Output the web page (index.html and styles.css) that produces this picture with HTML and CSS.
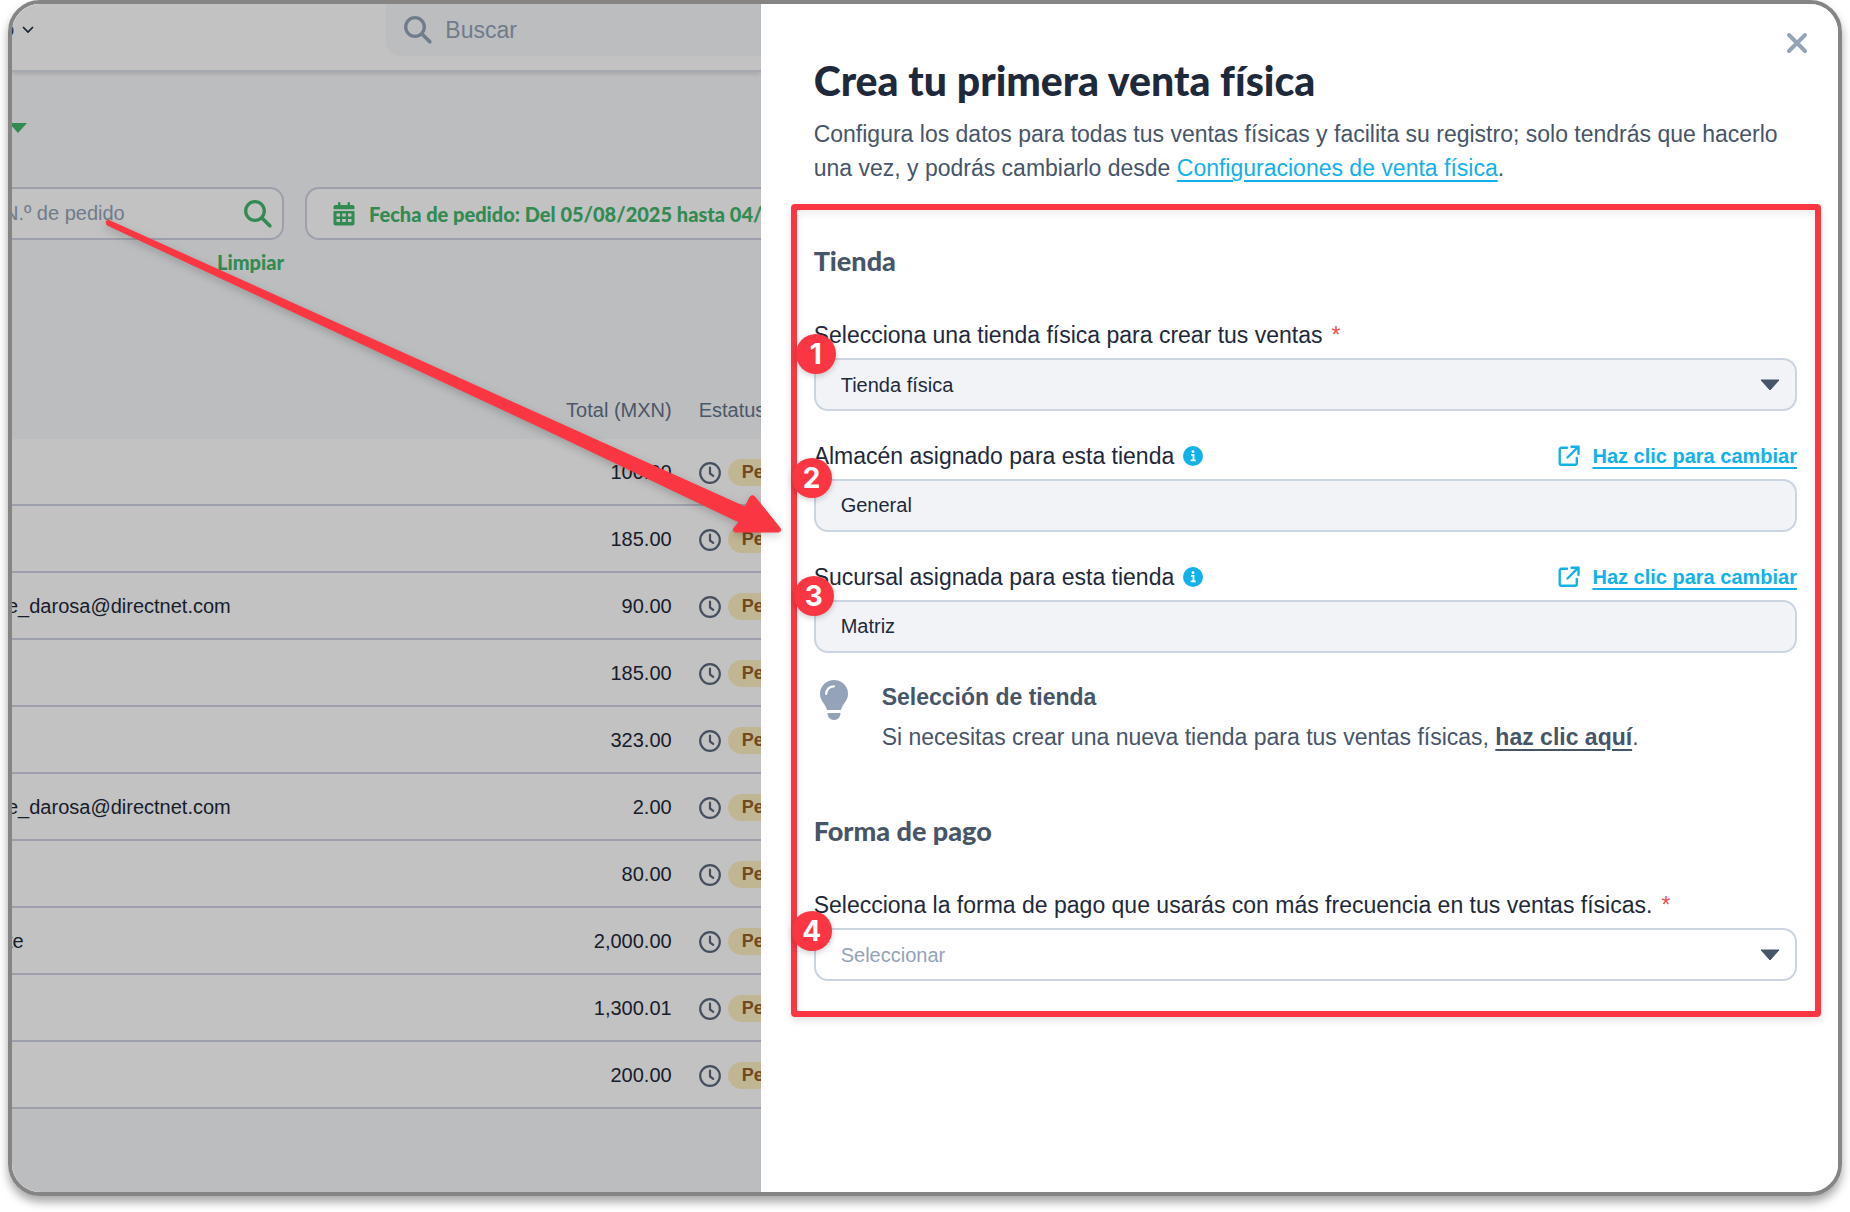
FILE: index.html
```
<!DOCTYPE html>
<html lang="es">
<head>
    <meta charset="UTF-8">
    <meta name="viewport" content="width=device-width, initial-scale=1">
    <title>Crea tu primera venta física</title>
    <link rel="stylesheet" href="styles.css">
</head>
<body>

<svg class="sprite" aria-hidden="true">
    <symbol id="i-search" viewBox="0 0 28 28">
        <circle cx="11" cy="11" r="9.300" fill="none" stroke="currentColor" stroke-width="3.300"/>
        <path d="M18 18l7.800 7.800" fill="none" stroke="currentColor" stroke-width="3.600" stroke-linecap="round"/>
    </symbol>
    <symbol id="i-calendar" viewBox="0 0 22 24">
        <path fill="currentColor" d="M5 1.200a1.200 1.200 0 0 1 2.500 0V3h7V1.200a1.200 1.200 0 0 1 2.500 0V3h2.500A2 2 0 0 1 21.500 5v2.200H.5V5A2 2 0 0 1 2.500 3H5z"/>
        <path fill="currentColor" fill-rule="evenodd" d="M.5 9h21v12.500a2 2 0 0 1-2 2h-17a2 2 0 0 1-2-2zM3.500 11.500v3h3.500v-3zM9.200 11.500v3h3.600v-3zM15 11.500v3h3.500v-3zM3.500 17v3h3.500v-3zM9.200 17v3h3.600v-3zM15 17v3h3.500v-3z"/>
    </symbol>
    <symbol id="i-clock" viewBox="0 0 22 22">
        <g fill="none" stroke="currentColor" stroke-width="2.200" stroke-linecap="round" stroke-linejoin="round">
            <circle cx="11" cy="11" r="9.800"/>
            <path d="M11 5.500V11.500l3.200 2.300"/>
        </g>
    </symbol>
    <symbol id="i-info" viewBox="0 0 20 20">
        <circle cx="10" cy="10" r="10" fill="currentColor"/>
        <circle cx="10" cy="5.700" r="1.400" fill="#fff"/>
        <path d="M8 8.900h2.500v5M7.600 14.400h5" fill="none" stroke="#fff" stroke-width="1.800"/>
    </symbol>
    <symbol id="i-external" viewBox="0 0 22 22">
        <path d="M9 2.700H3.500A1.800 1.800 0 0 0 1.700 4.500V18a1.800 1.800 0 0 0 1.800 1.800H17a1.800 1.800 0 0 0 1.800-1.800V13M9.500 12.500L19.800 2.200M13.500 1.700h7v7" fill="none" stroke="currentColor" stroke-width="2.400" stroke-linecap="round"/>
    </symbol>
</svg>

<div class="frame">
    <main class="orders">
        <header class="topbar">
            <button class="account" type="button" aria-label="Cuenta">
                <span>o</span>
                <svg width="12" height="8" viewBox="0 0 12 8"><path d="M1.500 1.500L6 6l4.500-4.500" fill="none" stroke="currentColor" stroke-width="1.700" stroke-linecap="round"/></svg>
            </button>
            <label class="search">
                <svg width="28" height="28"><use href="#i-search"/></svg>
                <input type="search" placeholder="Buscar" aria-label="Buscar">
            </label>
        </header>

        <div class="toolbar">
            <button class="menu" type="button" aria-label="Acciones">
                <svg width="20" height="10" viewBox="0 0 20 10"><path d="M1 0h18l-9 10z" fill="currentColor"/></svg>
            </button>
        </div>

        <div class="filters">
            <div class="filter">
                <label class="filter-box">
                    <input type="text" placeholder="N.º de pedido" aria-label="N.º de pedido">
                    <svg width="28" height="28"><use href="#i-search"/></svg>
                </label>
                <button class="clear" type="button">Limpiar</button>
            </div>
            <button class="date" type="button">
                <svg width="22" height="24"><use href="#i-calendar"/></svg>
                Fecha de pedido: Del 05/08/2025 hasta 04/09/2025
            </button>
        </div>

        <table class="table">
            <thead>
                <tr><th></th><th class="total">Total (MXN)</th><th class="status">Estatus</th></tr>
            </thead>
            <tbody>
                <tr><td></td><td class="total">100.00</td><td class="status"><div><svg width="22" height="22"><use href="#i-clock"/></svg><span class="pill">Pendiente</span></div></td></tr>
                <tr><td></td><td class="total">185.00</td><td class="status"><div><svg width="22" height="22"><use href="#i-clock"/></svg><span class="pill">Pendiente</span></div></td></tr>
                <tr><td>e_darosa@directnet.com</td><td class="total">90.00</td><td class="status"><div><svg width="22" height="22"><use href="#i-clock"/></svg><span class="pill">Pendiente</span></div></td></tr>
                <tr><td></td><td class="total">185.00</td><td class="status"><div><svg width="22" height="22"><use href="#i-clock"/></svg><span class="pill">Pendiente</span></div></td></tr>
                <tr><td></td><td class="total">323.00</td><td class="status"><div><svg width="22" height="22"><use href="#i-clock"/></svg><span class="pill">Pendiente</span></div></td></tr>
                <tr><td>e_darosa@directnet.com</td><td class="total">2.00</td><td class="status"><div><svg width="22" height="22"><use href="#i-clock"/></svg><span class="pill">Pendiente</span></div></td></tr>
                <tr><td></td><td class="total">80.00</td><td class="status"><div><svg width="22" height="22"><use href="#i-clock"/></svg><span class="pill">Pendiente</span></div></td></tr>
                <tr><td>te</td><td class="total">2,000.00</td><td class="status"><div><svg width="22" height="22"><use href="#i-clock"/></svg><span class="pill">Pendiente</span></div></td></tr>
                <tr><td></td><td class="total">1,300.01</td><td class="status"><div><svg width="22" height="22"><use href="#i-clock"/></svg><span class="pill">Pendiente</span></div></td></tr>
                <tr><td></td><td class="total">200.00</td><td class="status"><div><svg width="22" height="22"><use href="#i-clock"/></svg><span class="pill">Pendiente</span></div></td></tr>
            </tbody>
        </table>
        <div class="backdrop"></div>
    </main>

    <aside class="drawer">
        <button class="close" type="button" aria-label="Cerrar">
            <svg width="22" height="22" viewBox="0 0 22 22"><path d="M3 3l16 16M19 3L3 19" stroke="currentColor" stroke-width="4" stroke-linecap="round"/></svg>
        </button>
        <div class="intro">
            <h1>Crea tu primera venta física</h1>
            <p>Configura los datos para todas tus ventas físicas y facilita su registro; solo tendrás que hacerlo una vez, y podrás cambiarlo desde <a href="#">Configuraciones de venta física</a>.</p>
        </div>

        <form class="highlight">
            <h2>Tienda</h2>
            <div class="field">
                <div class="field-head">
                    <label for="tienda">Selecciona una tienda física para crear tus ventas</label>
                    <span class="required">*</span>
                </div>
                <div class="select">
                    <select id="tienda" class="control filled"><option>Tienda física</option></select>
                    <svg width="20" height="12" viewBox="0 0 20 12"><path d="M1 1h18l-9 10z" fill="currentColor" stroke="currentColor" stroke-linejoin="round"/></svg>
                </div>
            </div>
            <div class="field">
                <div class="field-head">
                    <label for="almacen">Almacén asignado para esta tienda</label>
                    <svg class="info" width="20" height="20"><use href="#i-info"/></svg>
                    <a class="change" href="#"><svg width="22" height="22"><use href="#i-external"/></svg><span>Haz clic para cambiar</span></a>
                </div>
                <input id="almacen" class="control filled" type="text" value="General" readonly>
            </div>
            <div class="field">
                <div class="field-head">
                    <label for="sucursal">Sucursal asignada para esta tienda</label>
                    <svg class="info" width="20" height="20"><use href="#i-info"/></svg>
                    <a class="change" href="#"><svg width="22" height="22"><use href="#i-external"/></svg><span>Haz clic para cambiar</span></a>
                </div>
                <input id="sucursal" class="control filled" type="text" value="Matriz" readonly>
            </div>
            <div class="tip">
                <svg width="28" height="40" viewBox="0 0 28 40">
                    <path d="M14 0a14 14 0 0 1 14 14c0 7-5.500 9.500-7 16H7C5.500 23.500 0 21 0 14A14 14 0 0 1 14 0zM7.500 33h13c0 4-2.500 7-6.500 7s-6.500-3-6.500-7z" fill="currentColor"/>
                    <path d="M6.200 14c0-4.500 3.300-7.700 7.800-7.700" fill="none" stroke="#fff" stroke-width="2.200" stroke-linecap="round"/>
                </svg>
                <div>
                    <strong>Selección de tienda</strong>
                    <p>Si necesitas crear una nueva tienda para tus ventas físicas, <a href="#">haz clic aquí</a>.</p>
                </div>
            </div>

            <h2>Forma de pago</h2>
            <div class="field">
                <div class="field-head">
                    <label for="pago">Selecciona la forma de pago que usarás con más frecuencia en tus ventas físicas.</label>
                    <span class="required">*</span>
                </div>
                <div class="select">
                    <select id="pago" class="control empty"><option>Seleccionar</option></select>
                    <svg width="20" height="12" viewBox="0 0 20 12"><path d="M1 1h18l-9 10z" fill="currentColor" stroke="currentColor" stroke-linejoin="round"/></svg>
                </div>
            </div>

            <span class="pin pin-1">1</span>
            <span class="pin pin-2">2</span>
            <span class="pin pin-3">3</span>
            <span class="pin pin-4">4</span>
        </form>
    </aside>

    <svg class="arrow" width="690" height="330" viewBox="100 210 690 330" aria-hidden="true">
        <path d="M108 220L745 507L750 497Q752 494 755 497L780 528Q782 532 778 532L736 532Q732 532 734 528L739 522L540 427L107 225Q105 221 108 220z" fill="#fa3643" stroke="#fa3643" stroke-linejoin="round"/>
    </svg>
</div>

</body>
</html>
```
FILE: styles.css
```
* {
    box-sizing: border-box;
}
body {
    margin: 0;
    background: #fff;
    color: #1e293b;
    font-family: "Liberation Sans", Arial, sans-serif;
    font-size: 20px;
}
button,
input,
select {
    font: inherit;
    color: inherit;
    margin: 0;
    padding: 0;
    border: 0;
    background: none;
}
svg {
    flex: none;
    display: block;
}
h1,
h2,
p {
    margin: 0;
}
.sprite {
    display: none;
}

.frame {
    position: relative;
    display: flex;
    min-height: calc(100vh - 16px);
    margin: 0 8px 16px;
    border: 4px solid #868584;
    border-radius: 32px;
    box-shadow: 0 6px 10px rgba(0, 0, 0, .35);
    overflow: hidden;
}

/* orders page behind the drawer */
.orders {
    position: relative;
    flex: 1;
    min-width: 0;
    overflow: hidden;
    background: #f8f9fc;
}
.backdrop {
    position: absolute;
    inset: 0;
    background: rgba(0, 0, 0, .24);
}
.topbar {
    display: flex;
    justify-content: space-between;
    height: 68px;
    background: #fff;
    border-bottom: 2px solid #dcdfe8;
    box-shadow: 0 2px 5px rgba(0, 0, 0, .12);
}
.account {
    display: flex;
    align-items: center;
    gap: 8px;
    height: 51px;
    margin-left: -9px;
}
.search {
    display: flex;
    align-items: center;
    gap: 13px;
    width: 50%;
    height: 52px;
    padding-left: 18px;
    border-radius: 0 0 0 14px;
    background: #f8f9fc;
    color: #94a3b8;
    font-size: 23px;
    line-height: 34px;
}
.search input,
.filter-box input {
    flex: 1;
    min-width: 0;
}
input::placeholder {
    color: #94a3b8;
    opacity: 1;
}
.toolbar {
    padding: 51px 0 54px;
}
.menu {
    display: block;
    margin-left: -4px;
    color: #43b66c;
}
.filters {
    display: flex;
    gap: 21px;
}
.filter {
    flex: none;
    width: 292px;
    margin-left: -20px;
}
.filter-box {
    display: flex;
    align-items: center;
    height: 53px;
    padding: 0 10px;
    border: 2px solid #cfd3e2;
    border-radius: 14px;
    background: #fff;
    color: #43b66c;
}
.clear {
    display: block;
    margin: 10px 0 0 auto;
    color: #43b66c;
    font-family: Lato, sans-serif;
    font-weight: 900;
    line-height: 24px;
}
.date {
    flex: none;
    display: flex;
    align-items: center;
    gap: 14px;
    height: 53px;
    padding: 0 26px;
    border: 2px solid #cfd3e2;
    border-radius: 14px;
    background: #fff;
    color: #43b66c;
    font-family: Lato, sans-serif;
    font-weight: 900;
    white-space: nowrap;
}
.table {
    width: calc(100% + 5px);
    margin: 108px 0 0 -5px;
    table-layout: fixed;
    border-collapse: separate;
    border-spacing: 0;
}
.table th {
    height: 57px;
    padding: 0;
    color: #64748b;
    font-weight: 400;
    text-align: left;
}
.table td {
    height: 67px;
    padding: 2px 0 0;
    background: #fff;
    border-bottom: 2px solid #cfd3e2;
}
.table .total {
    width: 130px;
    text-align: right;
}
.table .status {
    width: 89px;
    padding-left: 27px;
    overflow: hidden;
    white-space: nowrap;
}
.status div {
    display: flex;
    align-items: center;
    gap: 7px;
    color: #5c697d;
}
.pill {
    flex: none;
    height: 27px;
    padding: 0 14px;
    border-radius: 14px;
    background: #fef0c3;
    color: #94602b;
    font-size: 18px;
    font-weight: 700;
    line-height: 27px;
}

/* drawer */
.drawer {
    position: relative;
    width: 59%;
    background: #fff;
}
.close {
    position: absolute;
    top: 28px;
    right: 30px;
    color: #94a3b8;
}
.intro {
    padding: 52px 53px 0;
    color: #475569;
    font-size: 23px;
    line-height: 34px;
}
.intro h1 {
    margin-bottom: 11px;
    color: #1e293b;
    font-family: Lato, sans-serif;
    font-size: 41px;
    font-weight: 900;
    font-variant-ligatures: none;
    line-height: 50px;
}
a {
    color: #13b1ea;
    text-underline-offset: 4px;
    text-decoration-thickness: 2px;
}
.highlight {
    position: relative;
    margin: 19px 17px 0 30px;
    padding: 34px 18px 30px 17px;
    border: 6px solid #fa3643;
    border-radius: 4px;
    box-shadow: 0 3px 8px rgba(0, 0, 0, .12), inset 0 3px 8px rgba(0, 0, 0, .08);
}
.highlight h2 {
    margin-bottom: 40px;
    color: #475569;
    font-family: Lato, sans-serif;
    font-size: 27px;
    font-weight: 900;
    line-height: 34px;
}
.field {
    margin-bottom: 28px;
}
.field-head {
    display: flex;
    align-items: center;
    gap: 9px;
    margin-bottom: 6px;
    font-size: 23px;
    line-height: 34px;
}
.required {
    color: #f6504f;
}
.info {
    color: #13b1ea;
}
.change {
    display: flex;
    align-items: center;
    gap: 12px;
    margin-left: auto;
    font-size: 20px;
    font-weight: 700;
    line-height: 32px;
    text-decoration: none;
}
.change span {
    text-decoration: underline 2px;
    text-underline-offset: 4px;
}
.control {
    display: block;
    width: 100%;
    height: 53px;
    padding: 0 25px;
    border: 2px solid #cbd5e1;
    border-radius: 14px;
    background: #fff;
    appearance: none;
}
.control.filled {
    background: #f1f3f7;
}
.control.empty {
    color: #94a3b8;
}
.select {
    position: relative;
}
.select svg {
    position: absolute;
    top: 21px;
    right: 17px;
    color: #475569;
    pointer-events: none;
}
.tip {
    display: flex;
    gap: 34px;
    margin: -1px 0 60px;
    padding-left: 6px;
    color: #94a3b8;
}
.tip div {
    color: #475569;
    font-size: 23px;
    line-height: 34px;
}
.tip p {
    margin-top: 6px;
}
.tip a {
    color: inherit;
    font-weight: 700;
}
.highlight .field:last-of-type {
    margin-bottom: 0;
}

/* numbered pins and arrow drawn over the screen */
.pin {
    position: absolute;
    width: 40px;
    height: 40px;
    border-radius: 50%;
    background: #fa3643;
    color: #fff;
    font-family: Inter, sans-serif;
    font-size: 28px;
    font-weight: 700;
    line-height: 40px;
    text-align: center;
    box-shadow: 0 2px 6px rgba(0, 0, 0, .2);
}
.pin-1 {
    left: -1px;
    top: 124px;
}
.pin-2 {
    left: -5px;
    top: 248px;
}
.pin-3 {
    left: -3px;
    top: 366px;
}
.pin-4 {
    left: -5px;
    top: 701px;
}
.arrow {
    position: absolute;
    left: 88px;
    top: 206px;
    filter: drop-shadow(0 3px 4px rgba(0, 0, 0, .2));
    pointer-events: none;
}
```
